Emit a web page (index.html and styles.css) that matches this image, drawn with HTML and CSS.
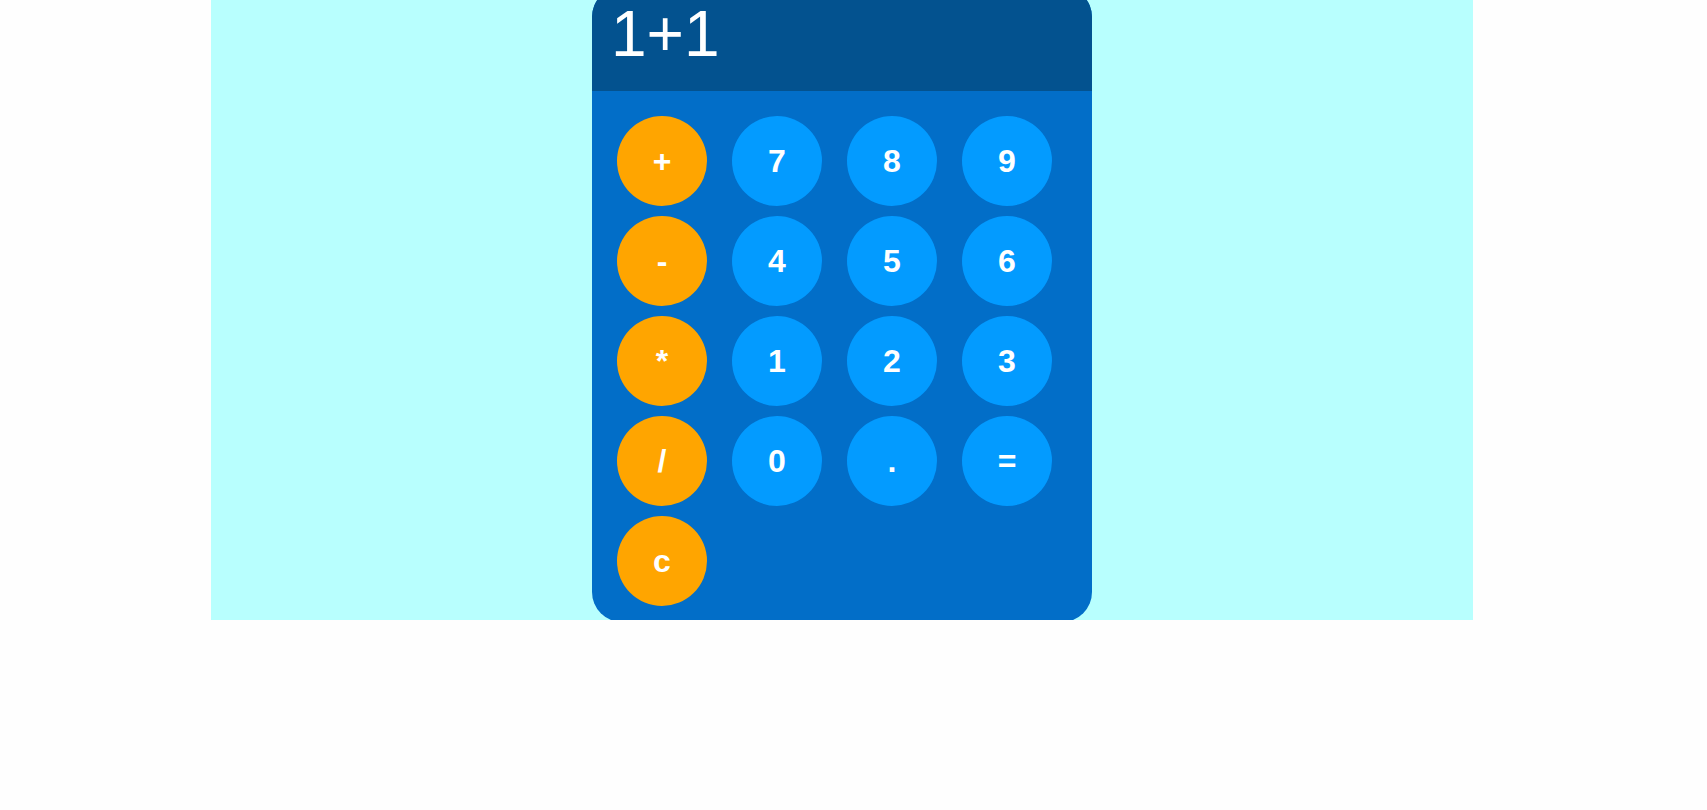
FILE: index.html
```html
<!DOCTYPE html>
<html lang="en">
<head>
<meta charset="utf-8">
<title>Calculator</title>
<link rel="stylesheet" href="styles.css">
</head>
<body>
<main class="stage">
  <div class="calculator">
    <div class="display">1+1</div>
    <div class="keypad">
      <button class="key op">+</button>
      <button class="key">7</button>
      <button class="key">8</button>
      <button class="key">9</button>
      <button class="key op">-</button>
      <button class="key">4</button>
      <button class="key">5</button>
      <button class="key">6</button>
      <button class="key op">*</button>
      <button class="key">1</button>
      <button class="key">2</button>
      <button class="key">3</button>
      <button class="key op">/</button>
      <button class="key">0</button>
      <button class="key">.</button>
      <button class="key">=</button>
      <button class="key op">c</button>
    </div>
  </div>
</main>
</body>
</html>
```
FILE: styles.css
```css
html, body {
  margin: 0;
  padding: 0;
  background: #fefefe;
  font-family: "Liberation Sans", Arial, sans-serif;
}

.stage {
  margin-left: 211px;
  width: 1262px;
  height: 620px;
  background: #b8fffe;
  display: flex;
  justify-content: center;
  align-items: flex-start;
  overflow: hidden;
}

.calculator {
  width: 500px;
  margin-top: -13px;
  background: #026ec8;
  border-radius: 30px;
  overflow: hidden;
}

.display {
  background: #03528f;
  color: #ffffff;
  font-family: "Liberation Sans", Arial, sans-serif;
  font-size: 64px;
  line-height: 74px;
  height: 74px;
  padding: 10px 19px 20px;
}

.keypad {
  display: grid;
  grid-template-columns: repeat(4, 90px);
  grid-auto-rows: 90px;
  column-gap: 25px;
  row-gap: 10px;
  padding: 25px 25px 16px;
}

.key {
  width: 90px;
  height: 90px;
  border: none;
  border-radius: 50%;
  background: #039bff;
  color: #ffffff;
  font-family: "Liberation Sans", Arial, sans-serif;
  font-weight: bold;
  font-size: 32px;
  padding: 0;
  cursor: pointer;
}

.key.op {
  background: #ffa500;
}
```
